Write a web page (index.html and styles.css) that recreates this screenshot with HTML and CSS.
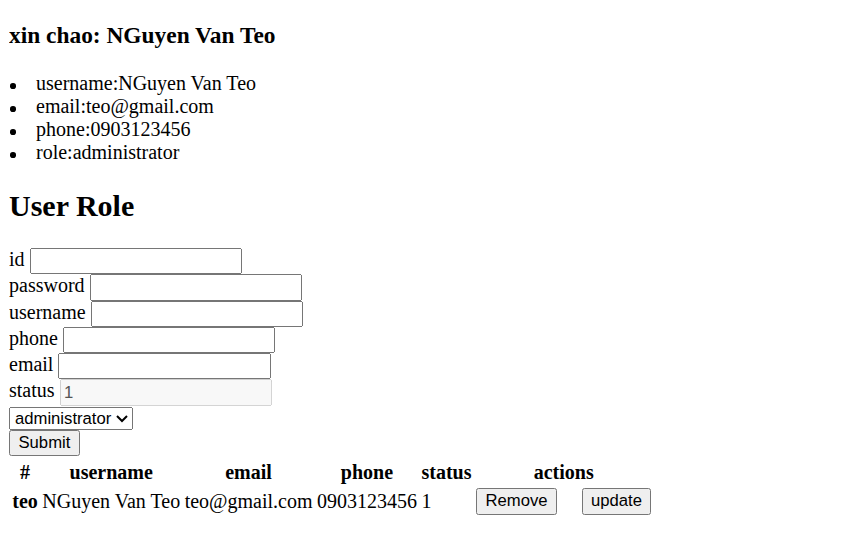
FILE: index.html
```html
<!DOCTYPE html>
<html>
<head>
<meta charset="utf-8">
<title>User Role</title>
<link rel="stylesheet" href="styles.css">
</head>
<body>
<h3 class="greeting">xin chao: NGuyen Van Teo</h3>
<ul class="info">
  <li>username:NGuyen Van Teo</li>
  <li>email:teo@gmail.com</li>
  <li>phone:0903123456</li>
  <li>role:administrator</li>
</ul>
<h2>User Role</h2>
<form class="role-form">
  id <input type="text" class="field"><br>
  password <input type="password" class="field"><br>
  username <input type="text" class="field"><br>
  phone <input type="text" class="field"><br>
  email <input type="text" class="field"><br>
  status <input type="text" class="field" value="1" disabled><br>
  <select class="role-select">
    <option>administrator</option>
    <option>user</option>
  </select><br>
  <button type="button" class="btn">Submit</button>
</form>
<table class="users">
  <tr>
    <th>#</th>
    <th>username</th>
    <th>email</th>
    <th>phone</th>
    <th>status</th>
    <th colspan="2">actions</th>
  </tr>
  <tr>
    <th>teo</th>
    <td>NGuyen Van Teo</td>
    <td>teo@gmail.com</td>
    <td>0903123456</td>
    <td>1</td>
    <td class="remove-cell"><button type="button" class="btn">Remove</button></td>
    <td><button type="button" class="btn">update</button></td>
  </tr>
</table>
</body>
</html>
```
FILE: styles.css
```css
html {
  zoom: 1.25;
}
body {
  margin: 8px 8px 8px 7.2px;
  font-family: "Liberation Serif", "Times New Roman", serif;
  color: #000;
  background: #fff;
}
.greeting {
  margin-top: 9.6px;
}
.info {
  padding-left: 21.6px;
  list-style: none;
}
.info li::before {
  content: "";
  display: inline-block;
  width: 4.5px;
  height: 4.5px;
  border-radius: 50%;
  background: #000;
  vertical-align: middle;
  margin-left: -20.6px;
  margin-right: 16.1px;
}
.field {
  box-sizing: border-box;
  width: 170px;
  height: 21px;
  font-family: "Liberation Sans", Arial, sans-serif;
  font-size: 13.33px;
}
.role-select,
.btn {
  font-family: "Liberation Sans", Arial, sans-serif;
  font-size: 13.33px;
}
.role-form {
  margin-bottom: 1px;
}
.remove-cell {
  padding-right: 17px;
}
```
